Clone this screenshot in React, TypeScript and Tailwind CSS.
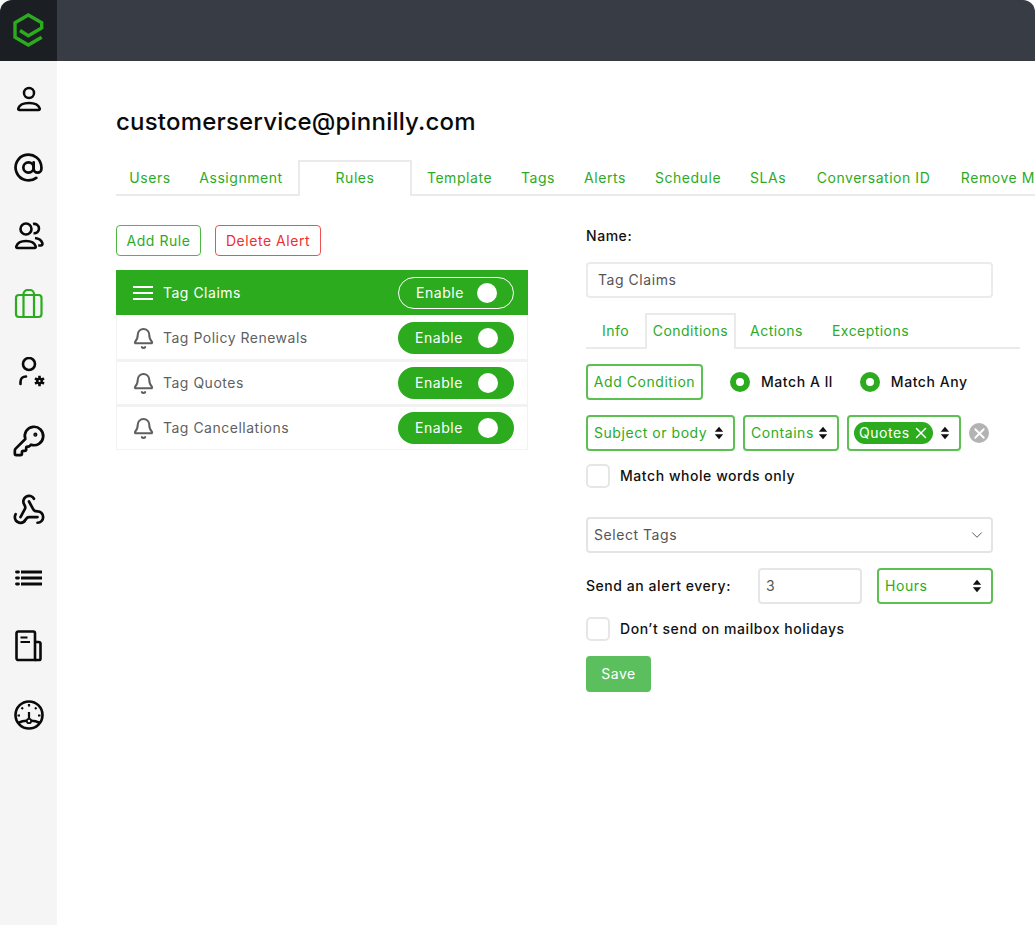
import { AtSign, Bell, ChevronDown, KeyRound, Webhook, X } from 'lucide-react'

const font = { fontFamily: 'Inter, sans-serif' }

function Logo() {
  return (
    <svg viewBox="0 0 57 61" fill="none" className="h-[61px] w-[57px] text-[#2cab1f]" aria-hidden="true">
      <path d="M41.700 29V22.700L28.300 15 15 22.700v14.600L28.300 45l13.400-7.800" stroke="currentColor" strokeWidth="3.400" />
      <path d="M20 30.500l8.300 5.300 13.400-7.800" stroke="currentColor" strokeWidth="3.400" />
    </svg>
  )
}

function UserIcon() {
  return (
    <svg viewBox="0 0 32 32" fill="none" stroke="currentColor" strokeWidth="2.500" className="h-8 w-8">
      <circle cx="16" cy="10" r="5" />
      <path d="M6.500 27h19c1 0 1.600-.8 1.200-1.700-1.200-3.300-5.700-5.300-10.700-5.300s-9.500 2-10.700 5.300c-.4.9.2 1.700 1.200 1.700z" />
    </svg>
  )
}

function UsersIcon() {
  return (
    <svg viewBox="0 0 32 32" fill="none" stroke="currentColor" strokeWidth="2.600" className="h-8 w-8">
      <circle cx="13" cy="9" r="5.500" />
      <path d="M4.500 28h17c1 0 1.500-.8 1.200-1.700-1.100-3.300-5-5.300-9.700-5.300s-8.600 2-9.700 5.300c-.3.9.2 1.700 1.200 1.700z" />
      <path d="M20 4c3-.7 6 1.200 6 4.600 0 3-2.500 5-5.500 4.600" />
      <path d="M22 18c3.600.4 6.300 2.200 7.300 5 .6 1.600-.2 2.500-1.600 2.500h-2.500" />
    </svg>
  )
}

function BriefcaseIcon() {
  return (
    <svg viewBox="0 0 32 32" fill="none" stroke="currentColor" strokeWidth="2.200" className="h-8 w-8">
      <rect x="3" y="7" width="25.500" height="22" rx="3" />
      <path d="M10.500 7v22M21 7v22" />
      <path d="M10.500 7V6a4 4 0 0 1 4-4H17a4 4 0 0 1 4 4v1" />
    </svg>
  )
}

function UserGearIcon() {
  return (
    <svg viewBox="0 0 32 32" fill="none" stroke="currentColor" className="h-8 w-8">
      <circle cx="16" cy="7" r="6" strokeWidth="2.600" />
      <path d="M7.500 27v-2c0-3.300 2.200-5.500 5.500-5.500" strokeWidth="2.600" strokeLinecap="round" />
      <circle cx="26.500" cy="24" r="3.400" fill="currentColor" stroke="none" />
      <circle cx="26.500" cy="24" r="1" fill="#f5f5f5" stroke="none" />
      <path d="M26.500 18.800v3M26.500 26.200v3M22 21.400l2.600 1.500M28.400 25.100l2.600 1.500M22 26.600l2.600-1.500M28.400 22.900l2.600-1.500" strokeWidth="2.600" />
    </svg>
  )
}

function ListIcon() {
  return (
    <svg viewBox="0 0 32 32" fill="none" stroke="currentColor" strokeWidth="2.800" className="h-8 w-8">
      <path d="M8 10h21M8 16h21M8 22h21" />
      <path d="M3.500 10h2M3.500 16h2M3.500 22h2" strokeLinecap="round" />
    </svg>
  )
}

function BookIcon() {
  return (
    <svg viewBox="0 0 32 32" fill="none" stroke="currentColor" strokeWidth="2.600" className="h-8 w-8">
      <path d="M3.500 3.200c0-1 .8-1.700 1.700-1.700h15.100c.9 0 1.700.8 1.700 1.700V30H5.200c-.9 0-1.700-.8-1.700-1.700z" />
      <path d="M22 12h3.500c1 0 2 .7 2 1.600v14.800c0 .9-.7 1.600-1.600 1.600H22" />
      <path d="M7.500 7.500h7M7.500 12h9.500" strokeWidth="2.200" />
    </svg>
  )
}

function GaugeIcon() {
  return (
    <svg viewBox="0 0 32 32" fill="none" stroke="currentColor" strokeWidth="2.600" className="h-8 w-8">
      <circle cx="16" cy="16" r="13.500" />
      <path d="M5 24c3-1.500 6-2.300 8.500-2.300M18.500 21.700c2.500 0 5.500.8 8.500 2.300" />
      <circle cx="16" cy="22" r="2.200" strokeWidth="1.800" />
      <path d="M16 19.500V13M16 5v2.500M8.500 8.500 10 10M23.500 8.500 22 10M4.500 16.500H7M27.500 16.500H25" strokeWidth="2.200" />
    </svg>
  )
}

function MenuLines() {
  return (
    <svg viewBox="0 0 20 14" fill="none" stroke="currentColor" strokeWidth="2" className="h-[14px] w-5" aria-hidden="true">
      <path d="M0 1h20M0 7h20M0 13h20" />
    </svg>
  )
}

function UpDown() {
  return (
    <svg viewBox="0 0 10 14" className="h-[14px] w-[10px] shrink-0 fill-[#111]" aria-hidden="true">
      <path d="M5 .8 9.200 5.800H.8zM5 13.200.8 8.200h8.400z" />
    </svg>
  )
}

const sideIcons = [
  { key: 'user', icon: <UserIcon /> },
  { key: 'at', icon: <AtSign size={31} strokeWidth={2.100} /> },
  { key: 'users', icon: <UsersIcon /> },
  { key: 'briefcase', icon: <BriefcaseIcon />, active: true },
  { key: 'gear', icon: <UserGearIcon /> },
  { key: 'key', icon: <KeyRound size={34} strokeWidth={1.900} /> },
  { key: 'hook', icon: <Webhook size={34} strokeWidth={1.900} /> },
  { key: 'list', icon: <ListIcon /> },
  { key: 'book', icon: <BookIcon /> },
  { key: 'gauge', icon: <GaugeIcon /> },
]

const tabs = [
  { label: 'Users', width: 'w-[68px]' },
  { label: 'Assignment', width: 'w-[114px]' },
  { label: 'Rules', width: 'w-[114px]', active: true },
  { label: 'Template', width: 'w-[95px]' },
  { label: 'Tags', width: 'w-[62px]' },
  { label: 'Alerts', width: 'w-[72px]' },
  { label: 'Schedule', width: 'w-[94px]' },
  { label: 'SLAs', width: 'w-[66px]' },
  { label: 'Conversation ID', width: 'w-[145px]' },
  { label: 'Remove Mailbox', width: 'w-[146px]' },
]

const rules = ['Tag Policy Renewals', 'Tag Quotes', 'Tag Cancellations']

function Toggle({ outline = false }: { outline?: boolean }) {
  return (
    <div
      className={`flex h-8 w-[116px] items-center justify-between rounded-full pr-4 pl-[17px] text-sm text-white ${
        outline ? 'border-[1.5px] border-white' : 'bg-[#2cab1f]'
      }`}
    >
      <span className="tracking-[0.55px]">Enable</span>
      <span className="h-5 w-5 rounded-full bg-white" />
    </div>
  )
}

function Radio({ label, className }: { label: string; className: string }) {
  return (
    <div className={`flex items-center gap-[11px] ${className}`}>
      <span className="flex h-5 w-5 items-center justify-center rounded-full bg-[#2cab1f]">
        <span className="h-2 w-2 rounded-full bg-white" />
      </span>
      <span className="text-sm font-medium text-[#111]">{label}</span>
    </div>
  )
}

function Check({ label }: { label: string }) {
  return (
    <div className="flex items-center gap-[10px]">
      <span className="h-6 w-6 rounded-[5px] border-2 border-[#e6e6e6] bg-white" />
      <span className="text-sm font-medium text-[#111]">{label}</span>
    </div>
  )
}

export default function App() {
  return (
    <div style={font} className="flex h-[925px] w-[1035px] overflow-hidden bg-white">
      <aside className="flex w-[57px] shrink-0 flex-col bg-[#f5f5f5]">
        <div className="h-[61px] rounded-tl-xl bg-[#1b1e22]">
          <Logo />
        </div>
        <div className="flex flex-col pt-1">
          {sideIcons.map((item) => (
            <div
              key={item.key}
              className={`flex h-[68.4px] items-center justify-center ${item.active ? 'text-[#2cab1f]' : 'text-[#0a0a0a]'}`}
            >
              {item.icon}
            </div>
          ))}
        </div>
      </aside>

      <main className="min-w-0 flex-1">
        <header className="h-[61px] rounded-tr-xl bg-[#383c45]" />
        <div className="pl-[59px]">
          <h1 className="mt-[44px] text-2xl leading-[34px] font-medium tracking-[0.2px] text-[#0a0a0a]">
            customerservice@pinnilly.com
          </h1>
          <nav className="mt-[21px] flex border-b-2 border-[#eaeaea] text-sm tracking-[0.55px] text-[#2cab1f]">
            {tabs.map((tab) => (
              <div
                key={tab.label}
                className={`-mb-[2px] flex h-9 shrink-0 items-center justify-center whitespace-nowrap ${tab.width} ${
                  tab.active ? 'border-2 border-b-0 border-[#eaeaea] bg-white pb-[2px]' : ''
                }`}
              >
                {tab.label}
              </div>
            ))}
          </nav>

          <div className="mt-[29px] flex">
            <section className="w-[412px] shrink-0">
              <div className="flex gap-[14px] text-sm tracking-[0.55px]">
                <button className="h-[31px] w-[85px] rounded border-[1.5px] border-[#4db842] text-[#2cab1f]">
                  Add Rule
                </button>
                <button className="h-[31px] w-[106px] rounded border-[1.5px] border-[#f05050] text-[#ef2f2f]">
                  Delete Alert
                </button>
              </div>
              <div className="mt-[14px] border-x border-b border-[#f2f2f2] bg-[#f2f2f2] text-sm tracking-[0.5px]">
                <div className="-mx-px flex h-[45px] items-center bg-[#2cab1f] pr-[14px] pl-[17px] text-white">
                  <MenuLines />
                  <span className="ml-[10px] flex-1">Tag Claims</span>
                  <Toggle outline />
                </div>
                <div className="flex flex-col gap-[3px]">
                  {rules.map((rule, i) => (
                    <div
                      key={rule}
                      className={`flex items-center bg-white pr-[13px] pl-[15px] text-[#5f5f5f] ${
                        i === 0 ? 'h-[44px] pt-[2px]' : 'h-[42px]'
                      }`}
                    >
                      <Bell size={23} strokeWidth={2.100} />
                      <span className="ml-[8px] flex-1">{rule}</span>
                      <Toggle />
                    </div>
                  ))}
                </div>
              </div>
            </section>

            <section className="ml-[58px] w-[434px] shrink-0 text-sm tracking-[0.55px]">
              <p className="-mt-px leading-[24px] font-medium text-[#111]">Name:</p>
              <div className="mt-[14px] flex h-9 w-[407px] items-center rounded border-2 border-[#ebebeb] px-[10px] text-[#555]">
                Tag Claims
              </div>

              <div className="mt-[15px] flex border-b-2 border-[#eaeaea] tracking-[0.45px] text-[#2cab1f]">
                <div className="-mb-[2px] flex h-9 w-[59px] items-center justify-center">Info</div>
                <div className="-mb-[2px] flex h-9 w-[91px] items-center justify-center border-2 border-b-0 border-[#eaeaea] bg-white pb-[2px]">
                  Conditions
                </div>
                <div className="-mb-[2px] flex h-9 w-[81px] items-center justify-center">Actions</div>
                <div className="-mb-[2px] flex h-9 w-[107px] items-center justify-center">Exceptions</div>
              </div>

              <div className="mt-[15px] flex items-center">
                <button className="h-9 w-[117px] rounded border-2 border-[#5cc052] text-[#2cab1f]">
                  Add Condition
                </button>
                <Radio label="Match A ll" className="ml-[27px]" />
                <Radio label="Match Any" className="ml-[27px]" />
              </div>

              <div className="mt-[15px] flex items-center text-[#2cab1f]">
                <div className="flex h-9 w-[149px] items-center justify-between rounded border-2 border-[#5cc052] pr-[9px] pl-[6px]">
                  Subject or body
                  <UpDown />
                </div>
                <div className="ml-2 flex h-9 w-[96px] items-center justify-between rounded border-2 border-[#5cc052] pr-[9px] pl-[6px]">
                  Contains
                  <UpDown />
                </div>
                <div className="ml-2 flex h-9 w-[114px] items-center justify-between rounded border-2 border-[#5cc052] pr-[9px] pl-[5px]">
                  <span className="flex h-[22px] items-center gap-[2px] rounded-full bg-[#2cab1f] pr-[3px] pl-[5px] text-white">
                    Quotes
                    <X size={18} strokeWidth={2} />
                  </span>
                  <UpDown />
                </div>
                <span className="ml-2 flex h-5 w-5 items-center justify-center rounded-full bg-[#b3b3b3] text-white">
                  <X size={17} strokeWidth={2.500} />
                </span>
              </div>

              <div className="mt-[13px]">
                <Check label="Match whole words only" />
              </div>

              <div className="mt-[29px] flex h-9 w-[407px] items-center justify-between rounded border-2 border-[#e4e4e4] pr-[5px] pl-[6px] text-[#555]">
                Select Tags
                <ChevronDown size={18} strokeWidth={1.300} />
              </div>

              <div className="mt-[15px] flex items-center">
                <span className="w-[172px] font-medium text-[#111]">Send an alert every:</span>
                <div className="flex h-9 w-[104px] items-center rounded border-2 border-[#e6e6e6] px-[6px] text-[#555]">
                  3
                </div>
                <div className="ml-[15px] flex h-9 w-[116px] items-center justify-between rounded border-2 border-[#5cc052] pr-[9px] pl-[6px] text-[#2cab1f]">
                  Hours
                  <UpDown />
                </div>
              </div>

              <div className="mt-[13px]">
                <Check label="Don’t send on mailbox holidays" />
              </div>

              <button className="mt-[15px] h-9 w-[65px] rounded bg-[#5cbf5e] text-white">Save</button>
            </section>
          </div>
        </div>
      </main>
    </div>
  )
}
